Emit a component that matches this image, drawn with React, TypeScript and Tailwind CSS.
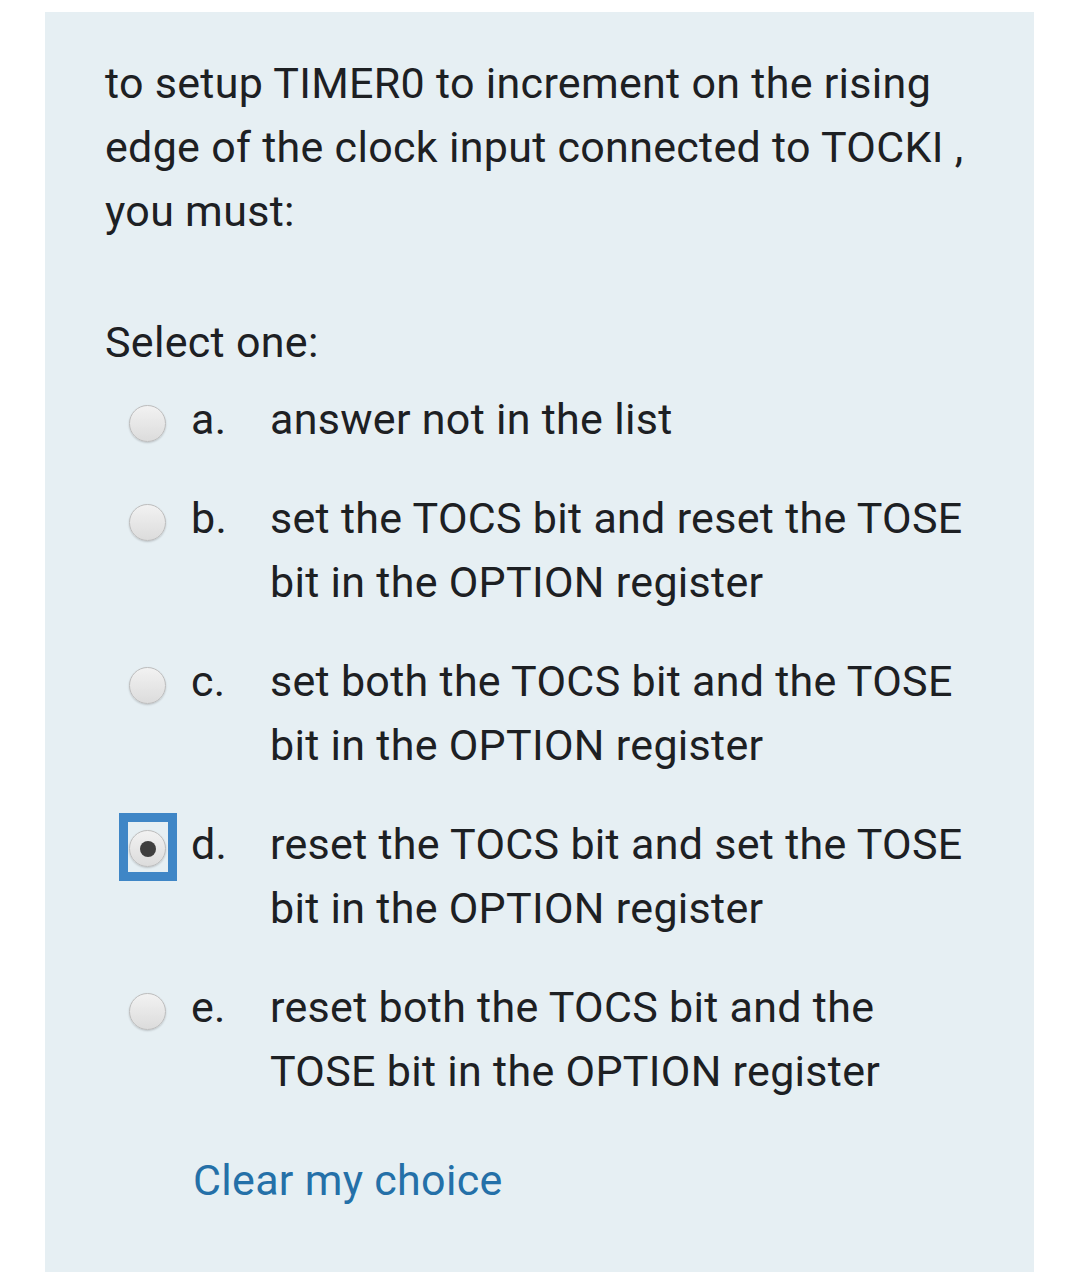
import React from "react";

const options = [
  { letter: "a.", lines: ["answer not in the list"] },
  { letter: "b.", lines: ["set the TOCS bit and reset the TOSE", "bit in the OPTION register"] },
  { letter: "c.", lines: ["set both the TOCS bit and the TOSE", "bit in the OPTION register"] },
  { letter: "d.", lines: ["reset the TOCS bit and set the TOSE", "bit in the OPTION register"], checked: true },
  { letter: "e.", lines: ["reset both the TOCS bit and the", "TOSE bit in the OPTION register"] },
];

function Radio({ checked }: { checked?: boolean }) {
  return (
    <div className="relative w-[37px] h-[37px] shrink-0 mt-[18px]">
      {checked && (
        <span className="absolute left-[-10px] right-[-11px] top-[-17px] bottom-[-14px] border-[9px] border-[#3f86c6]" />
      )}
      <span className="absolute inset-0 rounded-full border border-[#bdbdbd] bg-gradient-to-b from-[#f2f2f2] to-[#dcdcdc] shadow-[0_1px_2px_rgba(0,0,0,0.18)] flex items-center justify-center">
        {checked && <span className="w-[16px] h-[16px] rounded-full bg-[#3f3f3f]" />}
      </span>
    </div>
  );
}

export default function App() {
  return (
    <div className="bg-white w-[1066px] h-[1277px] pt-[12px] pl-[45px]" style={{ fontFamily: "Roboto, 'Noto Sans', sans-serif" }}>
      <div className="w-[989px] h-[1260px] bg-[#e6eff3] pt-[39px] px-[60px] text-[#1d2023] text-[43px] leading-[64px] tracking-[0.3px]">
        <p className="whitespace-nowrap">
          to setup TIMER0 to increment on the rising
          <br />
          edge of the clock input connected to TOCKI ,
          <br />
          you must:
        </p>
        <p className="mt-[67px]">Select one:</p>
        <div className="mt-[13px] flex flex-col gap-[35px] pl-[24px]">
          {options.map((o) => (
            <div key={o.letter} className="flex">
              <Radio checked={o.checked} />
              <span className="ml-[25px] w-[79px] shrink-0">{o.letter}</span>
              <span className="whitespace-nowrap">
                {o.lines.map((l, i) => (
                  <React.Fragment key={i}>
                    {i > 0 && <br />}
                    {l}
                  </React.Fragment>
                ))}
              </span>
            </div>
          ))}
        </div>
        <p className="mt-[45px] pl-[88px] text-[#2470a8]">Clear my choice</p>
      </div>
    </div>
  );
}
